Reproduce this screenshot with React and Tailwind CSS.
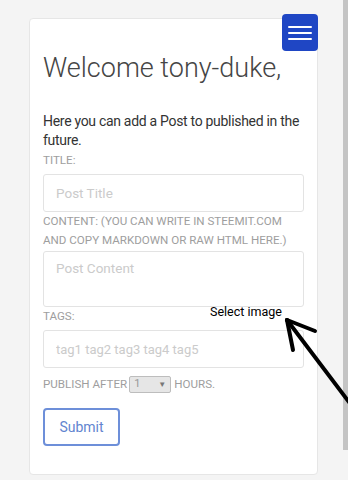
import React from "react";

function MenuButton() {
  return (
    <button
      type="button"
      className="absolute -top-[5px] -right-px flex h-[37px] w-[36px] flex-col items-center justify-center gap-[4px] rounded-[4px] bg-[#1f46c4]"
    >
      <span className="block h-[2px] w-[24px] rounded bg-white" />
      <span className="block h-[2px] w-[24px] rounded bg-white" />
      <span className="block h-[2px] w-[24px] rounded bg-white" />
    </button>
  );
}

function Label({ children, className = "" }) {
  return (
    <div className={`text-[11.6px] leading-[16px] uppercase text-[#9e9e9e] ${className}`}>
      {children}
    </div>
  );
}

export default function App() {
  return (
    <div
      className="relative flex h-[480px] w-[348px] overflow-hidden bg-[#f4f4f4]"
      style={{ fontFamily: "Roboto, 'Noto Sans', sans-serif" }}
    >
      <div className="flex-1 pl-[29px] pr-[25px] pt-[18px]">
        <div className="relative rounded-[4px] border border-[#e6e6e6] bg-white px-[13px] pb-[28px] pt-[31px]">
          <MenuButton />
          <h1 className="text-[27px] font-light leading-[36px] text-[#454545]">
            Welcome tony-duke,
          </h1>
          <p className="-mr-[6px] mt-[26px] text-[14px] leading-[19px] tracking-[-0.3px] text-[#333]">
            Here you can add a Post to published in the future.
          </p>
          <Label className="mt-[2px]">Title:</Label>
          <input
            type="text"
            placeholder="Post Title"
            className="mt-[6px] block h-[38px] w-full rounded-[3px] border border-[#e3e3e3] px-[12px] text-[13.5px] placeholder:text-[#cbcbcb] outline-none"
          />
          <div className="text-[11.6px] leading-[19px] uppercase text-[#9e9e9e]">
            Content: (You can write in steemit.com and copy markdown or raw html here.)
          </div>
          <textarea
            placeholder="Post Content"
            className="mt-px block h-[56px] w-full resize-none rounded-[3px] border border-[#e3e3e3] px-[12px] py-[6px] text-[13.5px] leading-[20px] placeholder:text-[#cbcbcb] outline-none"
          />
          <Label className="mt-px">Tags:</Label>
          <input
            type="text"
            placeholder="tag1 tag2 tag3 tag4 tag5"
            className="mt-[6px] block h-[38px] w-full rounded-[3px] border border-[#e3e3e3] px-[12px] text-[13px] placeholder:text-[#cbcbcb] outline-none"
          />
          <div className="mt-[8px] flex h-[17px] items-center text-[11.6px] uppercase text-[#9e9e9e]">
            <span>Publish after</span>
            <span className="ml-[2px] flex h-[17px] w-[42px] items-center justify-between rounded-[2px] border border-[#bdbdbd] bg-[#e6e6e6] px-[4px] text-[11px] text-[#999]">
              <span>1</span>
              <span className="text-[8px] text-[#777]">▼</span>
            </span>
            <span className="ml-[3px]">Hours.</span>
          </div>
          <button
            type="button"
            className="mt-[15px] h-[38px] w-[77px] rounded-[4px] border-2 border-[#6d8fd9] text-[14px] text-[#6285cf]"
          >
            Submit
          </button>
        </div>
      </div>
      <div className="w-[5px] shrink-0">
        <div className="h-[450px] w-full bg-[#c4c4c4]" />
      </div>

      <div className="pointer-events-none absolute left-[210px] top-[304px] text-[12.5px] leading-[16px] text-black">
        Select image
      </div>
      <svg
        className="pointer-events-none absolute left-0 top-0"
        width="348"
        height="480"
        viewBox="0 0 348 480"
      >
        <g stroke="#000" strokeWidth="4" strokeLinecap="round" fill="none">
          <path d="M287 320 L352 406" />
          <path d="M287 320 L315 331" />
          <path d="M287 320 L293 350" />
        </g>
      </svg>
    </div>
  );
}
